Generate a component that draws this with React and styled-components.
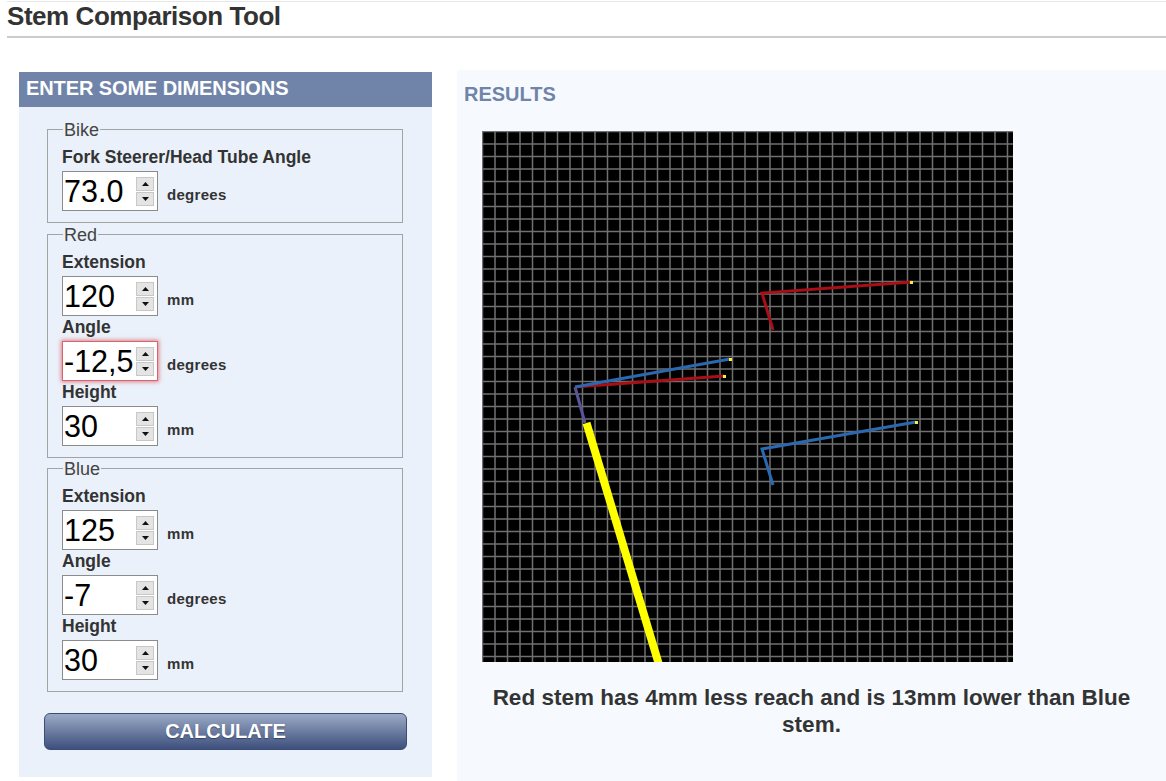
import React from 'react'
import styled, { createGlobalStyle } from 'styled-components'

const gridXs = Array.from({ length: 43 }, (_, i) => 482.5 + i * 12.5)
const gridYs = Array.from({ length: 43 }, (_, i) => 131.5 + i * 12.5)

const groups = [
  {
    legend: 'Bike',
    fields: [{ label: 'Fork Steerer/Head Tube Angle', value: '73.0', unit: 'degrees' }],
  },
  {
    legend: 'Red',
    fields: [
      { label: 'Extension', value: '120', unit: 'mm' },
      { label: 'Angle', value: '-12,5', unit: 'degrees', invalid: true },
      { label: 'Height', value: '30', unit: 'mm' },
    ],
  },
  {
    legend: 'Blue',
    fields: [
      { label: 'Extension', value: '125', unit: 'mm' },
      { label: 'Angle', value: '-7', unit: 'degrees' },
      { label: 'Height', value: '30', unit: 'mm' },
    ],
  },
]

function Spinner() {
  return (
    <SpinBox>
      <SpinButton>
        <svg width="7" height="4" viewBox="0 0 7 4">
          <path d="M3.5 0 L7 4 L0 4 Z" fill="#111" />
        </svg>
      </SpinButton>
      <SpinButton>
        <svg width="7" height="4" viewBox="0 0 7 4">
          <path d="M0 0 L7 0 L3.5 4 Z" fill="#111" />
        </svg>
      </SpinButton>
    </SpinBox>
  )
}

function Chart() {
  return (
    <ChartSvg viewBox="482 131 531 531" width="531" height="531">
      <rect x="482" y="131" width="531" height="531" fill="#000" />
      <SoftLines>
        {gridXs.map((x) => (
          <line key={x} x1={x} x2={x} y1="125" y2="670" stroke="#707070" strokeWidth="1.5" />
        ))}
        {gridYs.map((y) => (
          <line key={y} x1="475" x2="1020" y1={y} y2={y} stroke="#707070" strokeWidth="1.5" />
        ))}
        <line x1="586.5" y1="423" x2="660" y2="668" stroke="#ffff00" strokeWidth="8" />
        <line x1="575" y1="387" x2="585" y2="423" stroke="#5a5499" strokeWidth="3" />
        <line x1="575" y1="387" x2="724" y2="376" stroke="#a80f16" strokeWidth="3" />
        <line x1="575" y1="387" x2="730" y2="359" stroke="#2a68b0" strokeWidth="3" />
        <polyline points="773,330 762,293 912,282" fill="none" stroke="#a80f16" strokeWidth="3" />
        <polyline points="773,485 762,449 916,422" fill="none" stroke="#2a68b0" strokeWidth="3" />
        <rect x="723" y="375" width="3" height="3" fill="#f5f03c" />
        <rect x="729" y="358" width="3" height="3" fill="#f5f03c" />
        <rect x="910" y="281" width="3" height="3" fill="#f5f03c" />
        <rect x="915" y="421" width="3" height="3" fill="#f5f03c" />
      </SoftLines>
    </ChartSvg>
  )
}

export default function App() {
  return (
    <>
      <GlobalStyle />
      <TitleBar>
        <Title>Stem Comparison Tool</Title>
      </TitleBar>
      <Columns>
        <Sidebar>
          <SidebarHeader>ENTER SOME DIMENSIONS</SidebarHeader>
          <SidebarBody>
            {groups.map((group) => (
              <Group key={group.legend}>
                <Legend>{group.legend}</Legend>
                {group.fields.map((field) => (
                  <div key={field.label}>
                    <FieldLabel>{field.label}</FieldLabel>
                    <FieldRow>
                      <InputBox $invalid={field.invalid}>
                        <NumberText>{field.value}</NumberText>
                        <Spinner />
                      </InputBox>
                      <Unit>{field.unit}</Unit>
                    </FieldRow>
                  </div>
                ))}
              </Group>
            ))}
            <CalculateButton type="button">CALCULATE</CalculateButton>
          </SidebarBody>
        </Sidebar>
        <Results>
          <ResultsTitle>RESULTS</ResultsTitle>
          <Chart />
          <Summary>Red stem has 4mm less reach and is 13mm lower than Blue stem.</Summary>
        </Results>
      </Columns>
    </>
  )
}

const GlobalStyle = createGlobalStyle`
  html, body {
    margin: 0;
    padding: 0;
    background: #ffffff;
    font-family: "Liberation Sans", Arial, sans-serif;
    color: #333333;
    overflow: hidden;
  }
`
const TitleBar = styled.header`
  margin-top: 1px;
  border-top: 1px solid #e6e6e6;
  margin-left: 7px;
  height: 34px;
  border-bottom: 2px solid #cccccc;
  margin-bottom: 32px;
`
const Title = styled.h1`
  margin: 0;
  font-size: 26px;
  line-height: 28px;
  font-weight: bold;
  letter-spacing: -0.45px;
  color: #333333;
`
const Columns = styled.main`
  display: flex;
  align-items: flex-start;
  height: 711px;
`
const Sidebar = styled.section`
  margin: 2px 0 0 19px;
  width: 413px;
  height: 705px;
  background: #eaf1fa;
`
const SidebarHeader = styled.h2`
  margin: 0;
  height: 35px;
  padding-left: 7px;
  background: #7084aa;
  color: #ffffff;
  font-size: 20px;
  line-height: 33px;
  font-weight: bold;
  letter-spacing: -0.1px;
`
const SidebarBody = styled.div`
  padding: 14px 0 0 28px;
`
const Group = styled.fieldset`
  box-sizing: border-box;
  width: 356px;
  margin: 0 0 3px;
  padding: 9px 14px 11px;
  border: 1px solid #a3a3a3;

  &:last-of-type {
    margin-top: -1px;
  }
`
const Legend = styled.legend`
  padding: 2px 1px 0;
  margin-left: 1px;
  font-size: 18px;
  line-height: 14px;
  color: #444444;
`
const FieldLabel = styled.div`
  padding-top: 1px;
  font-size: 17.5px;
  line-height: 21px;
  font-weight: bold;
  color: #333333;
`
const FieldRow = styled.div`
  display: flex;
  align-items: center;
  gap: 9px;
  margin: 3px 0 0;
`
const InputBox = styled.div`
  box-sizing: border-box;
  width: 96px;
  height: 40px;
  display: flex;
  align-items: center;
  justify-content: space-between;
  padding: 0 3px 0 1px;
  background: #ffffff;
  border: 1px solid ${(p) => (p.$invalid ? '#d9656c' : '#8c8c8c')};
  box-shadow: ${(p) => (p.$invalid ? '0 0 4px 1px rgba(220, 70, 80, 0.65)' : 'none')};
`
const NumberText = styled.span`
  font-size: 30.5px;
  line-height: 38px;
  color: #000000;
`
const SpinBox = styled.div`
  flex: none;
  display: flex;
  flex-direction: column;
  gap: 1px;
  width: 18px;
`
const SpinButton = styled.div`
  box-sizing: border-box;
  height: 14px;
  display: flex;
  align-items: center;
  justify-content: center;
  background: #e4e4e4;
  border: 1px solid #c8c8c8;
`
const Unit = styled.span`
  margin-top: 7px;
  font-size: 15px;
  font-weight: bold;
  letter-spacing: 0.3px;
  color: #333333;
`
const CalculateButton = styled.button`
  display: block;
  box-sizing: border-box;
  width: 363px;
  height: 37px;
  margin: 21px 0 0 -3px;
  padding: 0;
  border: 1px solid #3b4d73;
  border-radius: 6px;
  background: linear-gradient(to bottom, #9baac6, #3d4f7c);
  color: #ffffff;
  font-family: "Liberation Sans", Arial, sans-serif;
  font-size: 20px;
  font-weight: bold;
  text-shadow: 0 1px 1px rgba(30, 40, 70, 0.6);
`
const Results = styled.section`
  box-sizing: border-box;
  margin-left: 25px;
  width: 709px;
  height: 711px;
  background: #f6faff;
  padding-top: 12px;
`
const ResultsTitle = styled.h2`
  margin: 0 0 25px 7px;
  font-size: 20px;
  line-height: 24px;
  font-weight: bold;
  color: #7084aa;
`
const ChartSvg = styled.svg`
  display: block;
  margin-left: 25px;
`
const SoftLines = styled.g`
  filter: blur(0.4px);
`
const Summary = styled.p`
  margin: 22px 20px 0;
  text-align: center;
  font-size: 22.5px;
  line-height: 27px;
  font-weight: bold;
  color: #333333;
`
